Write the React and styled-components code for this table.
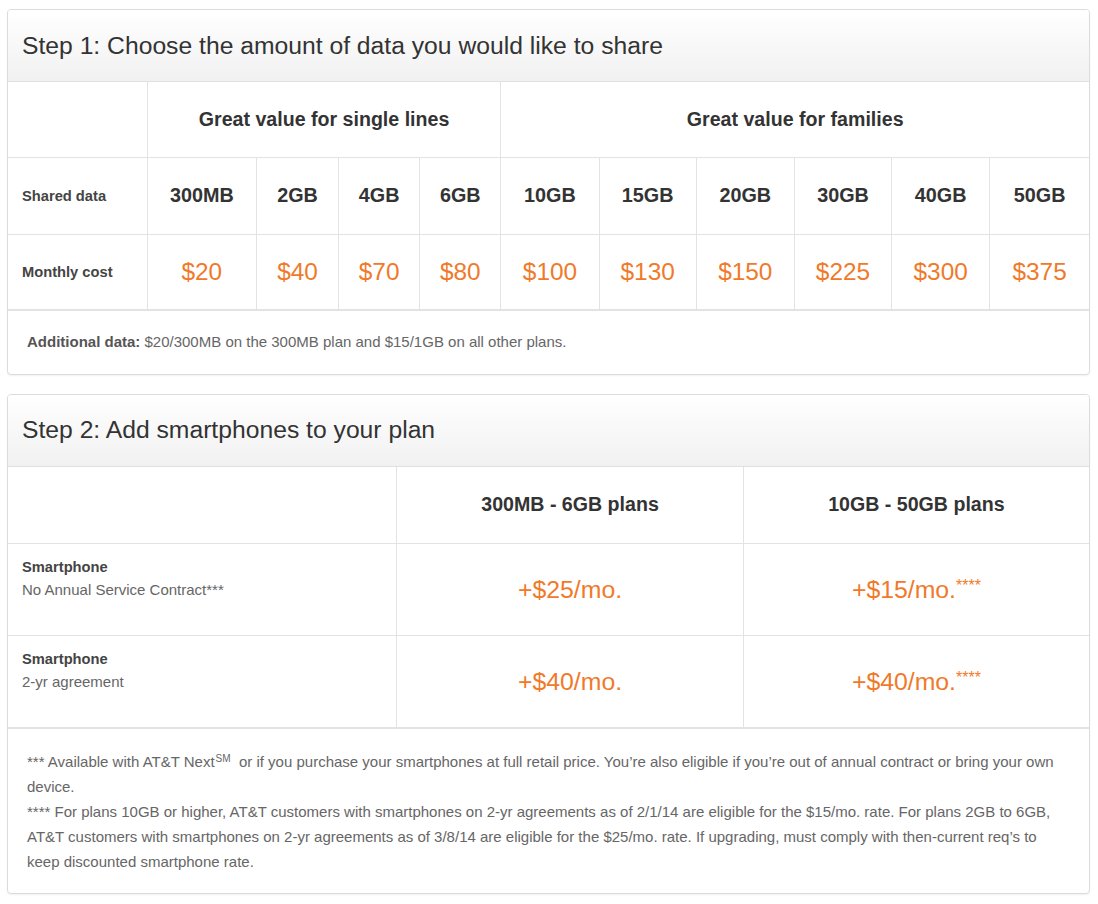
import styled, { createGlobalStyle } from "styled-components";

const GlobalStyle = createGlobalStyle`
  body {
    margin: 0;
    background: #ffffff;
    font-family: "Liberation Sans", Arial, sans-serif;
    color: #333;
  }
`;

const Page = styled.div`
  padding: 9px 10px 10px 7px;
  display: flex;
  flex-direction: column;
  gap: 19px;
`;

const Panel = styled.section`
  width: 1081px;
  border: 1px solid #dcdcdc;
  border-radius: 4px;
  box-shadow: 0 1px 2px rgba(0, 0, 0, 0.06);
  background: #fff;
  overflow: hidden;
`;

const PanelHeader = styled.div`
  height: 71px;
  display: flex;
  align-items: center;
  padding: 0 14px;
  background: linear-gradient(#ffffff, #f1f1f1);
  border-bottom: 1px solid #e0e0e0;
`;

const Title = styled.h2`
  margin: 0;
  font-size: 24.7px;
  font-weight: 400;
  color: #333;
`;

const Table = styled.table`
  width: 100%;
  border-collapse: collapse;
  table-layout: fixed;
`;

const Row = styled.tr`
  height: ${(p) => p.$h}px;
`;

const Cell = styled.td`
  border: 1px solid #e3e3e3;
  text-align: center;
  vertical-align: middle;
  padding: 0;
  &:first-child {
    border-left: none;
  }
  &:last-child {
    border-right: none;
  }
  tr:first-child > & {
    border-top: none;
  }
`;

const LabelCell = styled(Cell)`
  text-align: left;
  padding-left: 14px;
  font-size: 14.7px;
  font-weight: 700;
  color: #444;
`;

const PhoneCell = styled(LabelCell)`
  vertical-align: top;
  padding-top: 15px;
`;

const GroupHead = styled(Cell)`
  font-size: 19.6px;
  font-weight: 700;
  color: #333;
`;

const Size = styled(Cell)`
  font-size: 19.8px;
  font-weight: 700;
  color: #333;
`;

const Price = styled(Cell)`
  font-size: ${(p) => p.$size || 24.4}px;
  color: #f07a2a;
`;

const Stars = styled.span`
  font-size: 16px;
  vertical-align: 7px;
`;

const Sub = styled.div`
  font-weight: 400;
  color: #666;
  font-size: 15px;
  margin-top: 6px;
`;

const Note = styled.div`
  border-top: 1px solid #e3e3e3;
  padding: ${(p) => p.$pad};
  font-size: 15px;
  color: #666;
  line-height: ${(p) => p.$lh || 18}px;
  p {
    margin: 0;
  }
  b {
    color: #555;
  }
  sup {
    font-size: 10px;
    line-height: 0;
    vertical-align: 5px;
    margin-left: 1px;
  }
`;

const sizes = ["300MB", "2GB", "4GB", "6GB", "10GB", "15GB", "20GB", "30GB", "40GB", "50GB"];
const costs = ["$20", "$40", "$70", "$80", "$100", "$130", "$150", "$225", "$300", "$375"];
const widths = [139, 109, 82, 81, 81, 98, 97, 98, 97, 98, 99];

const phones = [
  { sub: "No Annual Service Contract***", a: "+$25/mo.", b: "+$15/mo." },
  { sub: "2-yr agreement", a: "+$40/mo.", b: "+$40/mo." },
];

export default function App() {
  return (
    <>
      <GlobalStyle />
      <Page>
        <Panel>
          <PanelHeader>
            <Title>Step 1: Choose the amount of data you would like to share</Title>
          </PanelHeader>
          <Table>
            <colgroup>
              {widths.map((w, i) => (
                <col key={i} style={{ width: w }} />
              ))}
            </colgroup>
            <tbody>
              <Row $h={75}>
                <LabelCell />
                <GroupHead colSpan={4}>Great value for single lines</GroupHead>
                <GroupHead colSpan={6}>Great value for families</GroupHead>
              </Row>
              <Row $h={77}>
                <LabelCell>Shared data</LabelCell>
                {sizes.map((s) => (
                  <Size key={s}>{s}</Size>
                ))}
              </Row>
              <Row $h={75}>
                <LabelCell>Monthly cost</LabelCell>
                {costs.map((c) => (
                  <Price key={c}>{c}</Price>
                ))}
              </Row>
            </tbody>
          </Table>
          <Note $pad="22px 19px 23px">
            <b>Additional data:</b> $20/300MB on the 300MB plan and $15/1GB on all other plans.
          </Note>
        </Panel>

        <Panel>
          <PanelHeader>
            <Title>Step 2: Add smartphones to your plan</Title>
          </PanelHeader>
          <Table>
            <colgroup>
              <col style={{ width: 388 }} />
              <col style={{ width: 346 }} />
              <col style={{ width: 345 }} />
            </colgroup>
            <tbody>
              <Row $h={77}>
                <LabelCell />
                <GroupHead>300MB - 6GB plans</GroupHead>
                <GroupHead>10GB - 50GB plans</GroupHead>
              </Row>
              {phones.map((p) => (
                <Row $h={92} key={p.sub}>
                  <PhoneCell>
                    Smartphone
                    <Sub>{p.sub}</Sub>
                  </PhoneCell>
                  <Price $size={24.8}>{p.a}</Price>
                  <Price $size={24.8}>
                    {p.b}
                    <Stars>****</Stars>
                  </Price>
                </Row>
              ))}
            </tbody>
          </Table>
          <Note $pad="20px 19px 19px" $lh={25}>
            <p>
              *** Available with AT&amp;T Next<sup>SM</sup>&nbsp; or if you purchase your smartphones at full retail
              price. You&rsquo;re also eligible if you&rsquo;re out of annual contract or bring your own device.
            </p>
            <p>
              **** For plans 10GB or higher, AT&amp;T customers with smartphones on 2-yr agreements as of 2/1/14 are
              eligible for the $15/mo. rate. For plans 2GB to 6GB, AT&amp;T customers with smartphones on 2-yr
              agreements as of 3/8/14 are eligible for the $25/mo. rate. If upgrading, must comply with then-current
              req&rsquo;s to keep discounted smartphone rate.
            </p>
          </Note>
        </Panel>
      </Page>
    </>
  );
}
